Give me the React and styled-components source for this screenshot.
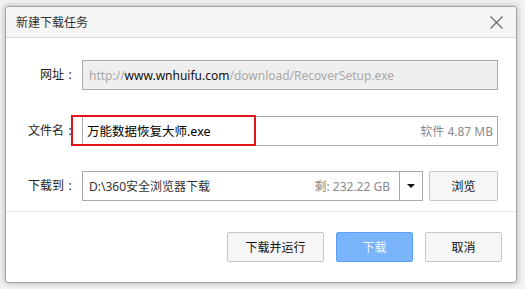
import React from "react";
import styled, { createGlobalStyle } from "styled-components";

const FONT = `"Noto Sans", "Noto Sans CJK SC", sans-serif`;

const GlobalStyle = createGlobalStyle`
  html, body {
    margin: 0;
    padding: 0;
    background: #f2f2f2;
    font-family: ${FONT};
  }
`;

const Stage = styled.div`
  width: 525px;
  height: 289px;
  padding: 6px 0 0 5px;
  box-sizing: border-box;
`;

const Dialog = styled.div`
  width: 512px;
  height: 277px;
  box-sizing: border-box;
  background: #fff;
  border: 1px solid #a3a3a3;
  border-radius: 3px;
  box-shadow: 0 0 6px rgba(0, 0, 0, 0.28);
  display: flex;
  flex-direction: column;
  overflow: hidden;
`;

const TitleBar = styled.div`
  height: 30px;
  flex-shrink: 0;
  background: #f5f5f5;
  border-bottom: 1px solid #dcdcdc;
  display: flex;
  align-items: center;
  justify-content: space-between;
  padding: 0 10px 0 10px;
`;

const Title = styled.span`
  font-size: 12px;
  color: #333;
`;

const CloseButton = styled.button`
  width: 14px;
  height: 14px;
  padding: 0;
  margin-right: 3px;
  border: none;
  background: none;
  display: flex;
  align-items: center;
  justify-content: center;
`;

const Form = styled.div`
  display: grid;
  grid-template-columns: 70px 1fr;
  column-gap: 6px;
  row-gap: 16px;
  padding: 22px 18px 0 0;
  flex: 1;
`;

const LabelText = styled.label`
  font-size: 12px;
  color: #222;
  text-align: right;
  line-height: 30px;
`;

const Colon = styled.span`
  display: inline-block;
  width: 12px;
  text-align: center;
`;

const Label = ({ children }) => (
  <LabelText>
    {children}
    <Colon>:</Colon>
  </LabelText>
);

const Field = styled.div`
  position: relative;
  height: 30px;
  box-sizing: border-box;
  border: 1px solid #aaa;
  background: ${(p) => (p.$disabled ? "#efefef" : "#fff")};
  display: flex;
  align-items: center;
  justify-content: space-between;
  padding: 0 4px 0 ${(p) => (p.$disabled ? 6 : 4)}px;
  font-size: 12px;
  white-space: nowrap;
`;

const Muted = styled.span`
  color: ${(p) => p.$color || "#a8a8a8"};
`;

const Strong = styled.span`
  color: #111;
`;

const FileName = styled.span`
  color: #000;
  font-size: 12.5px;
`;

const Highlight = styled.div`
  position: absolute;
  left: -12px;
  top: -2px;
  width: 185px;
  height: 31px;
  box-sizing: border-box;
  border: 2px solid #e5141b;
  pointer-events: none;
`;

const PathRow = styled.div`
  display: flex;
  gap: 6px;
`;

const Select = styled.div`
  flex: 1;
  height: 30px;
  box-sizing: border-box;
  border: 1px solid #aaa;
  display: flex;
  font-size: 12px;
`;

const SelectValue = styled.div`
  flex: 1;
  display: flex;
  align-items: center;
  justify-content: space-between;
  padding: 0 9px 0 6px;
  color: #333;
`;

const Arrow = styled.div`
  width: 22px;
  border-left: 1px solid #aaa;
  display: flex;
  align-items: center;
  justify-content: center;
  &::after {
    content: "";
    border-left: 4px solid transparent;
    border-right: 4px solid transparent;
    border-top: 4px solid #111;
  }
`;

const Button = styled.button`
  height: 30px;
  width: ${(p) => p.$width}px;
  box-sizing: border-box;
  font-family: ${FONT};
  font-size: 12px;
  border-radius: 2px;
  border: 1px solid ${(p) => (p.$primary ? "#5aa0f6" : "#c6c6c6")};
  background: ${(p) => (p.$primary ? "#7ab4fb" : "#f6f6f6")};
  color: ${(p) => (p.$primary ? "#eef5ff" : "#111")};
  padding: 0;
`;

const Footer = styled.div`
  border-top: 1px solid #e4e4e4;
  display: flex;
  justify-content: flex-end;
  gap: 12px;
  padding: 20px 14px 20px 0;
`;

const CloseIcon = () => (
  <svg width="13" height="13" viewBox="0 0 13 13">
    <path d="M0.5 0.5L12.5 12.5M12.5 0.5L0.5 12.5" stroke="#666" strokeWidth="1.1" />
  </svg>
);

export default function App() {
  return (
    <>
      <GlobalStyle />
      <Stage>
        <Dialog>
          <TitleBar>
            <Title>新建下载任务</Title>
            <CloseButton aria-label="关闭">
              <CloseIcon />
            </CloseButton>
          </TitleBar>
          <Form>
            <Label>网址</Label>
            <Field $disabled>
              <span>
                <Muted>http://</Muted>
                <Strong>www.wnhuifu.com</Strong>
                <Muted>/download/RecoverSetup.exe</Muted>
              </span>
            </Field>
            <Label>文件名</Label>
            <Field>
              <FileName>万能数据恢复大师.exe</FileName>
              <Muted $color="#8a8a8a">软件 4.87 MB</Muted>
              <Highlight />
            </Field>
            <Label>下载到</Label>
            <PathRow>
              <Select>
                <SelectValue>
                  <span>D:\360安全浏览器下载</span>
                  <Muted $color="#8a8a8a">剩: 232.22 GB</Muted>
                </SelectValue>
                <Arrow />
              </Select>
              <Button $width={69}>浏览</Button>
            </PathRow>
          </Form>
          <Footer>
            <Button $width={97}>下载并运行</Button>
            <Button $width={77} $primary>
              下载
            </Button>
            <Button $width={77}>取消</Button>
          </Footer>
        </Dialog>
      </Stage>
    </>
  );
}
